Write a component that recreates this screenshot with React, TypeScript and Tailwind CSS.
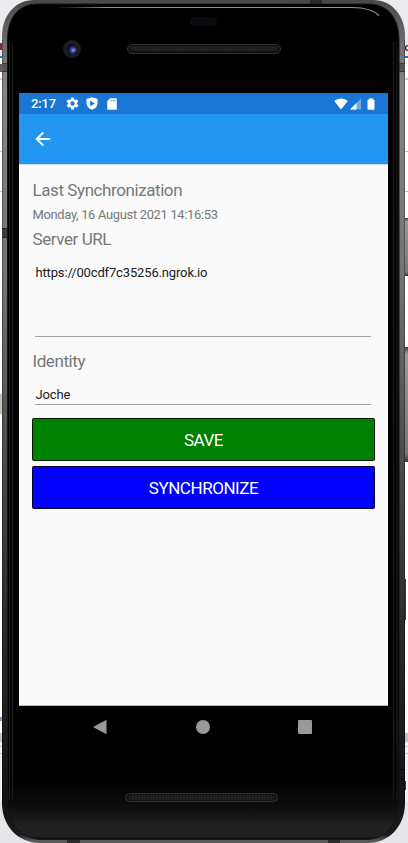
import type { ReactNode } from "react";

function Grille({ className }: { className: string }) {
  return (
    <div
      className={`flex shrink-0 items-center rounded-full border border-[#33312f] bg-[#12110f] px-[3px] ${className}`}
    >
      <div className="h-[5px] w-full rounded-full bg-[repeating-linear-gradient(90deg,#25221f_0px,#25221f_2px,#191714_2px,#191714_3px)]" />
    </div>
  );
}

/* Slivers of the desktop windows that stay visible beside the device. */
function DesktopBackdrop() {
  return (
    <div className="absolute inset-0 flex flex-col bg-white">
      <div className="h-[43px] shrink-0 bg-[#ebebf0]" />
      <div className="flex h-[13px] shrink-0 items-start justify-between bg-[#ebebf0]">
        <div className="h-[7px] w-[2px] bg-[#a02035]" />
        <div className="mt-[2px] h-[6px] w-[3px] rounded-l-full border border-r-0 border-[#16161c]" />
      </div>
      <div className="h-[2px] shrink-0 bg-[#0a7bd0]" />
      <div className="flex h-[20px] shrink-0 items-center">
        <div className="h-[8px] w-[2px] bg-[#70536a]" />
      </div>
      <div className="h-[2px] shrink-0 bg-[#cfcfdb]" />
      <div className="h-[72px] shrink-0 border-b border-[#c4c4c4]" />
      <div className="h-[40px] shrink-0 border-b border-[#c4c4c4]" />
      <div className="h-[202px] shrink-0" />
      <div className="h-[20px] w-[3px] shrink-0 bg-[#c9c1b4]" />
      <div className="h-[303px] shrink-0" />
      <div className="h-[4px] w-[2px] shrink-0 bg-[#68a8e6]" />
      <div className="h-[12px] shrink-0" />
      <div className="h-[9px] shrink-0 bg-[#c4c4c8]" />
      <div className="h-[5px] shrink-0 border-b border-[#c8c8cc] bg-[#f1f1f5]" />
      <div className="h-[7px] shrink-0 border-b border-[#c8c8cc] bg-[#f1f1f5]" />
      <div className="h-[47px] shrink-0 bg-[#f1f1f5]" />
      <div className="grow bg-[#e5e5ea]" />
    </div>
  );
}

/* Metal and glass body of the handset. */
function PhoneShell() {
  return (
    <svg className="absolute inset-0" width="408" height="843" viewBox="0 0 408 843" fill="none">
      <defs>
        <linearGradient id="rim" x1="0" x2="0" y1="0" y2="1">
          <stop offset="0" stopColor="#484848" />
          <stop offset=".04" stopColor="#666" />
          <stop offset=".1" stopColor="#858585" />
          <stop offset=".32" stopColor="#747474" />
          <stop offset=".52" stopColor="#505050" />
          <stop offset=".75" stopColor="#2a2a2a" />
          <stop offset=".95" stopColor="#121212" />
          <stop offset=".99" stopColor="#1c1b1c" />
          <stop offset=".997" stopColor="#5a575a" />
        </linearGradient>
        <linearGradient id="glass" x1="0" x2="0" y1="0" y2="1">
          <stop offset=".93" stopColor="#000" />
          <stop offset=".965" stopColor="#101010" />
          <stop offset=".985" stopColor="#222" />
          <stop offset=".997" stopColor="#202020" />
          <stop offset="1" stopColor="#050505" />
        </linearGradient>
        <linearGradient id="shine" x1="56" x2="380" y1="0" y2="0" gradientUnits="userSpaceOnUse">
          <stop offset="0" stopColor="#888" stopOpacity="0" />
          <stop offset=".15" stopColor="#8c8c8c" />
          <stop offset="1" stopColor="#929696" />
        </linearGradient>
        <linearGradient id="key" x1="0" x2="0" y1="0" y2="1">
          <stop offset="0" stopColor="#3c3c3c" />
          <stop offset=".06" stopColor="#999" />
          <stop offset=".93" stopColor="#777" />
          <stop offset="1" stopColor="#333" />
        </linearGradient>
      </defs>
      <rect x="404" y="218" width="5" height="58" fill="url(#key)" />
      <rect x="404" y="347" width="5" height="115" fill="url(#key)" />
      <path d="M405 579h1v41h-1zM405 781h1v9h-1z" fill="#3c3c3c" />
      <path
        d="M34 0H373C392 0 405 16 405 36V803C405 826 389 843 368 843H40C18 843 2 826 2 803V36C2 16 15 0 34 0Z"
        fill="url(#rim)"
      />
      <path d="M2.500 40V803M404.500 40V803" stroke="#000" strokeOpacity=".3" />
      <path d="M2 63h6v9H2zM399 63h6v9h-6z" fill="#555" />
      <path d="M2 63.500h6M2 71.500h6M399 63.500h6M399 71.500h6" stroke="#383838" />
      <path d="M2 228h6v10H2z" fill="#3a3a3a" />
      <path d="M2 228.500h6M2 237.500h6" stroke="#222" />
      <path d="M399 769.500h6M399 778.500h6" stroke="#050505" />
      <path d="M310 0h12v4h-12zM67 839h13v4H67zM328 839h12v4h-12z" fill="#2c2b2c" />
      <path
        d="M38 4H368C388 4 399 18 399 40V800C399 823 386 839.500 366 839.500H42C21 839.500 7.500 823 7.500 800V40C7.500 18 18 4 38 4Z"
        fill="url(#glass)"
        stroke="#151515"
      />
      <path d="M12.500 42V799M393.500 42V799" stroke="#1a1a1a" strokeWidth="1.500" />
      <path d="M9.500 42V800M397 42V800" stroke="#202020" />
      <path d="M58 7.500H352C365 7.700 374 10.500 379 15.500" stroke="url(#shine)" strokeWidth="1.200" />
    </svg>
  );
}

function StatusBar() {
  return (
    <div className="flex h-[21px] shrink-0 items-center bg-[#1976d2] pl-[12px] pr-[13px] text-white">
      <span className="w-[35px] text-[13px] leading-none font-medium tracking-[-0.15px]">2:17</span>
      <svg width="13" height="13" viewBox="1 1 22 22" fill="currentColor">
        <path
          fillRule="evenodd"
          d="M19.4 13a7.8 7.8 0 0 0 0-2l2.1-1.6a.5.5 0 0 0 .1-.7l-2-3.4a.5.5 0 0 0-.6-.2l-2.5 1a7.3 7.3 0 0 0-1.7-1l-.4-2.6a.5.5 0 0 0-.5-.4h-4a.5.5 0 0 0-.5.4l-.4 2.6c-.6.3-1.2.6-1.7 1l-2.5-1a.5.5 0 0 0-.6.2l-2 3.4a.5.5 0 0 0 .1.7L4.600 11a7.800 7.800 0 0 0 0 2l-2.100 1.600a.5.5 0 0 0-.1.700l2 3.400c.1.200.4.300.6.200l2.500-1c.5.4 1.100.8 1.700 1l.4 2.600c0 .3.200.5.5.5h4c.3 0 .5-.2.5-.5l.4-2.600c.6-.2 1.200-.6 1.700-1l2.500 1c.2.1.5 0 .6-.2l2-3.400a.5.5 0 0 0-.1-.7L19.400 13ZM12 15.700a3.700 3.700 0 1 1 0-7.400 3.700 3.700 0 0 1 0 7.400Z"
        />
      </svg>
      <svg className="ml-[7px]" width="12" height="13" viewBox="0 0 12 13">
        <path d="M6 .2 11.500 2v4.500c0 2.900-2.300 5.300-5.500 6.300C2.800 11.800.5 9.400.5 6.500V2Z" fill="currentColor" />
        <path d="M4.200 3.500 8.800 6.400 4.200 9.300Z" fill="#1976d2" />
      </svg>
      <svg className="ml-[9px]" width="10" height="12" viewBox="0 0 10 12">
        <path d="M3.200.3H9c.5 0 .8.300.8.800v9.800c0 .5-.3.800-.8.800H1c-.5 0-.8-.3-.8-.8V3.400Z" fill="currentColor" />
        <path d="M4 1.500v2M6 1.500v2M8 1.500v2" stroke="#1976d2" strokeWidth=".7" />
      </svg>
      <svg className="ml-auto" width="14" height="12" viewBox="0 0 14 12">
        <path d="M.2 3C4-.5 10-.5 13.800 3L7 11.500Z" fill="currentColor" />
      </svg>
      <svg className="ml-[2px]" width="11" height="12" viewBox="0 0 11 12">
        <path d="M11 .5v11H0Z" fill="currentColor" opacity=".4" />
        <path d="M6.500 5v6.500H0Z" fill="currentColor" />
      </svg>
      <svg className="ml-[6px]" width="8" height="12" viewBox="0 0 8 12">
        <path
          d="M2.300.2h3.400v1.200h1.100c.5 0 .7.300.7.700v8.900c0 .5-.2.800-.7.800H1.200c-.5 0-.7-.3-.7-.8V2.100c0-.4.2-.7.7-.7h1.100Z"
          fill="currentColor"
        />
      </svg>
    </div>
  );
}

function Label({ children }: { children: ReactNode }) {
  return (
    <div className="pl-[0.5px] text-[17px] leading-[24px] tracking-[-0.42px] text-[#787878]">{children}</div>
  );
}

function Field({ className, children }: { className: string; children: ReactNode }) {
  return (
    <div
      className={`ml-[3px] mr-[4px] border-b border-[#a5a5a5] pl-[0.5px] text-[13px] leading-[24px] tracking-[-0.15px] text-[#202020] ${className}`}
    >
      {children}
    </div>
  );
}

function ActionButton({ className, children }: { className: string; children: ReactNode }) {
  return (
    <button
      className={`flex h-[43px] items-center justify-center rounded-[2px] border border-black/80 pt-[2px] text-[17px] leading-none tracking-[-0.45px] text-white ${className}`}
    >
      {children}
    </button>
  );
}

export default function App() {
  return (
    <div className="relative h-[843px] w-[408px] overflow-hidden font-['Roboto',sans-serif]">
      <DesktopBackdrop />
      <PhoneShell />
      <div className="relative flex h-full flex-col pl-[19px] pr-[20px]">
        <div className="flex h-[93px] shrink-0 flex-col pt-[17px]">
          <div className="h-[9px] w-[27px] self-center rounded-full bg-[#0a0b10]" />
          <div className="mt-[13px] flex items-center pl-[44px]">
            <div className="mt-px flex size-[18px] items-center justify-center rounded-full bg-[#1d1c1c]">
              <div className="size-[10px] rounded-full bg-[radial-gradient(circle_at_62%_62%,#a4abf5_0px,#3f4cb5_2px,#151c50_4px,#080a18_6px)]" />
            </div>
            <Grille className="ml-[46px] h-[10px] w-[154px]" />
          </div>
        </div>
        <main className="flex h-[613px] shrink-0 flex-col border-b border-[#b5b9b9] bg-[#fafafa]">
          <StatusBar />
          <header className="flex h-[50px] shrink-0 items-center bg-[#2196f3] pl-[16px] text-white">
            <svg width="16" height="16" viewBox="0 0 16 16" fill="none" stroke="currentColor" strokeWidth="1.900">
              <path d="M15.200 8H2M8.400 1.300 1.700 8l6.700 6.700" />
            </svg>
          </header>
          <div className="h-px shrink-0 bg-[#cfddf0]" />
          <div className="flex flex-col px-[13px] pt-[13px]">
            <Label>Last Synchronization</Label>
            <div className="pl-[0.5px] text-[12.900px] leading-[25px] tracking-[-0.300px] text-[#787878]">
              Monday, 16 August 2021 14:16:53
            </div>
            <Label>Server URL</Label>
            <div className="flex flex-col gap-[12px] pt-[10px]">
              <Field className="h-[76px]">https://00cdf7c35256.ngrok.io</Field>
              <Label>Identity</Label>
            </div>
            <div className="flex flex-col pt-[10px]">
              <Field className="h-[22px]">Joche</Field>
            </div>
            <div className="flex flex-col gap-[5px] pt-[13px]">
              <ActionButton className="bg-[#008000]">SAVE</ActionButton>
              <ActionButton className="bg-[#0000ff]">SYNCHRONIZE</ActionButton>
            </div>
          </div>
        </main>
        <nav className="flex h-[42px] shrink-0 items-center justify-between pl-[73px] pr-[76px]">
          <svg width="15" height="16" viewBox="0 0 15 16">
            <path d="M14.500.7v14.600L1 8Z" fill="#999" />
          </svg>
          <div className="size-[14px] rounded-full bg-[#999]" />
          <div className="size-[14px] rounded-[1px] bg-[#999]" />
        </nav>
        <div className="flex justify-center pr-[4px] pt-[45px]">
          <Grille className="h-[9px] w-[153px]" />
        </div>
      </div>
    </div>
  );
}
